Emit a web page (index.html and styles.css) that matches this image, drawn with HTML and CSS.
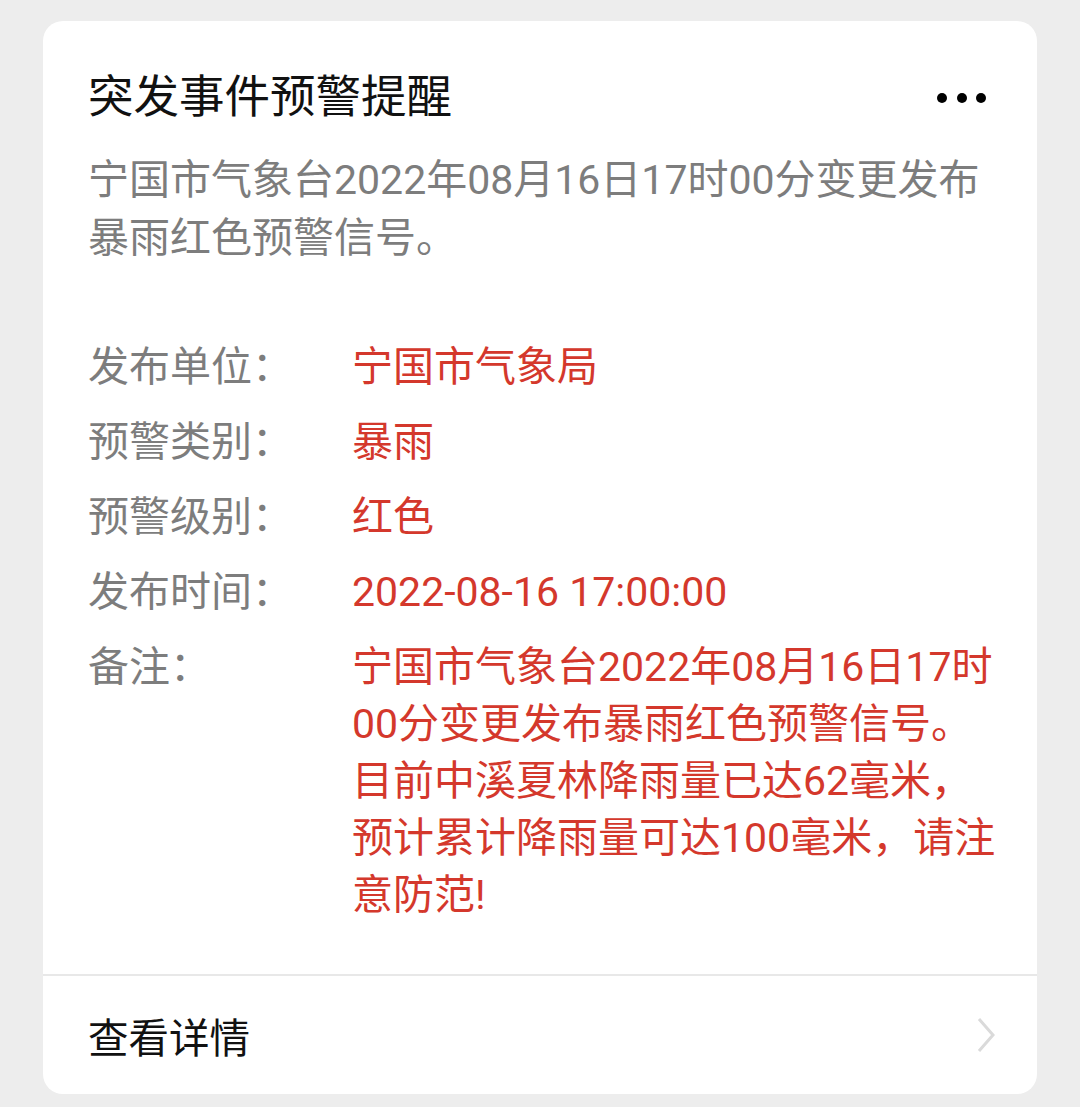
FILE: index.html
```html
<!DOCTYPE html>
<html lang="zh-CN">
<head>
    <meta charset="UTF-8">
    <meta name="viewport" content="width=device-width, initial-scale=1.0">
    <title>突发事件预警提醒</title>
    <link rel="stylesheet" href="styles.css">
</head>
<body>
    <div class="card">
        <div class="card-body">
            <div class="card-header">
                <h1 class="title">突发事件预警提醒</h1>
                <div class="more">
                    <span></span><span></span><span></span>
                </div>
            </div>
            <p class="summary">宁国市气象台2022年08月16日17时00分变更发布暴雨红色预警信号。</p>

            <div class="fields">
                <div class="field">
                    <div class="label">发布单位：</div>
                    <div class="value">宁国市气象局</div>
                </div>
                <div class="field">
                    <div class="label">预警类别：</div>
                    <div class="value">暴雨</div>
                </div>
                <div class="field">
                    <div class="label">预警级别：</div>
                    <div class="value">红色</div>
                </div>
                <div class="field">
                    <div class="label">发布时间：</div>
                    <div class="value">2022-08-16 17:00:00</div>
                </div>
                <div class="field">
                    <div class="label">备注：</div>
                    <div class="value">宁国市气象台2022年08月16日17时00分变更发布暴雨红色预警信号。目前中溪夏林降雨量已达62毫米，预计累计降雨量可达100毫米，请注意防范!</div>
                </div>
            </div>
        </div>

        <div class="card-footer">
            <span>查看详情</span>
            <svg class="chevron" width="20" height="36" viewBox="0 0 20 36">
                <polyline points="3,2 17,18 3,34" fill="none" stroke="#dadada" stroke-width="3"/>
            </svg>
        </div>
    </div>
</body>
</html>
```

FILE: styles.css
```css
/* Page */
body {
    margin: 0;
    background-color: #ededed;
    font-family: Roboto, "Noto Sans CJK SC", sans-serif;
    color: #111;
}

/* Card */
.card {
    width: 994px;
    margin: 21px 0 0 43px;
    background: #fff;
    border-radius: 20px;
    overflow: hidden;
}

.card-body {
    padding: 47px 38px 50px 45px;
    border-bottom: 2px solid #e8e8e8;
}

.card-header {
    display: flex;
    align-items: center;
    justify-content: space-between;
}

.title {
    margin: 0;
    font-size: 45.5px;
    font-weight: normal;
    line-height: 60px;
    color: #111;
}

/* three dots */
.more {
    display: flex;
    gap: 9.5px;
    margin-right: 13px;
}

.more span {
    width: 10px;
    height: 10px;
    border-radius: 50%;
    background: #000;
}

.summary {
    margin: 23px 0 0;
    font-size: 41px;
    line-height: 58px;
    color: #7d7d7d;
}

/* Info rows */
.fields {
    margin-top: 72px;
    display: flex;
    flex-direction: column;
    gap: 18px;
}

.field {
    display: flex;
    font-size: 41px;
    line-height: 57px;
}

.label {
    width: 264px;
    flex-shrink: 0;
    color: #7d7d7d;
}

.value {
    flex: 1;
    color: #d4382c;
}

/* Footer link */
.card-footer {
    height: 118px;
    padding: 0 41px 0 45px;
    display: flex;
    align-items: center;
    justify-content: space-between;
    font-size: 40.5px;
    color: #111;
}

.chevron {
    display: block;
}
```
